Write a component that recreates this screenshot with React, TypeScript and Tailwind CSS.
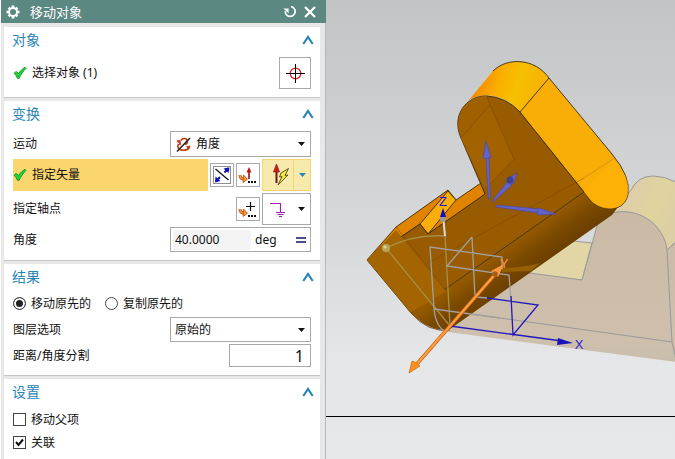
import type { ReactNode } from "react";

function Check() {
  return (
    <svg width="14" height="14" viewBox="0 0 14 14" className="shrink-0" aria-hidden="true">
      <path d="M1.2 7.2 L3.2 5.4 L5.5 7.6 C7.2 5 9.5 2.8 12 1.3 L13 2.3 C10.2 4.9 8 8.6 6 12.4 L4.6 12.4 C3.8 10.3 2.7 8.7 1.2 7.2Z" fill="#22d43c" stroke="#0e9a22" strokeWidth="1" />
    </svg>
  );
}

function Gear() {
  return (
    <svg width="16" height="16" viewBox="0 0 16 16" aria-hidden="true">
      <path d="M8 1.500v13M1.500 8h13M3.600 3.600l8.800 8.800M12.400 3.600l-8.800 8.800" stroke="#fff" strokeWidth="2.600" />
      <circle cx="8" cy="8" r="4" fill="#5c8882" stroke="#fff" strokeWidth="1.900" />
    </svg>
  );
}

function Section({ title, className, children }: { title: string; className?: string; children: ReactNode }) {
  return (
    <section className={"bg-white px-2 " + (className ?? "")}>
      <div className="flex h-[26px] items-center justify-between">
        <h2 className="text-sm leading-6 text-[#2b86b8]">{title}</h2>
        <button type="button" aria-label={title} className="-mr-1.5 flex h-5 w-5 items-center justify-center">
          <svg width="12" height="10" viewBox="0 0 12 10" aria-hidden="true">
            <path d="M1.300 9 6 2l4.700 7" fill="none" stroke="#2b86b8" strokeWidth="2.200" />
          </svg>
        </button>
      </div>
      {children}
    </section>
  );
}

function Caret({ color = "#111" }: { color?: string }) {
  return (
    <svg width="7" height="4" viewBox="0 0 7 4" className="shrink-0" aria-hidden="true">
      <path d="M0 0h7L3.500 4z" fill={color} />
    </svg>
  );
}

function Hook() {
  return (
    <>
      <path d="M3 11c0 3 1.500 4.200 4.500 4.200" fill="none" stroke="#b8481c" strokeWidth="3" />
      <path d="M3 11c0 3 1.500 4.200 4.500 4.200" fill="none" stroke="#f39a35" strokeWidth="1.600" />
      <path d="M6.500 11l4 4.200-4.500 3.300z" fill="#f39a35" stroke="#b8481c" strokeWidth=".8" />
      <path d="M11 17h2v2h-2zM14 17h2v2h-2zM17 17h2v2h-2z" fill="#111" />
    </>
  );
}

const box = "border border-[#a9a9a9] bg-white";

function Panel() {
  return (
    <form className="ml-px flex w-[325px] shrink-0 flex-col border-r border-[#b5b7ba] bg-[#e7e7e7]" onSubmit={(e) => e.preventDefault()}>
      <header className="-mr-px flex h-[23px] items-center bg-[#5c8882] pl-1 pr-2.5 text-white">
        <Gear />
        <h1 className="ml-2 flex-1 pl-px text-[13px] leading-5">移动对象</h1>
        <button type="button" aria-label="重置" className="mr-2">
          <svg width="13" height="13" viewBox="0 0 13 13" aria-hidden="true">
            <path d="M8 1.700a4.900 4.900 0 1 1-5.700 4.500" fill="none" stroke="#fff" strokeWidth="1.800" />
            <path d="M.3 3.500H5.600V8.200z" fill="#fff" />
          </svg>
        </button>
        <button type="button" aria-label="关闭">
          <svg width="12" height="12" viewBox="0 0 12 12" aria-hidden="true">
            <path d="M1 1l10 10M11 1L1 11" stroke="#fff" strokeWidth="2.200" />
          </svg>
        </button>
      </header>

      <div className="flex flex-1 flex-col gap-[3px] pl-[3px] pr-[5px] pt-1 text-xs text-[#111]">
        <Section title="对象" className="border-b border-[#c6c6c6] pb-1">
          <div className="flex h-10 items-center gap-[5px] px-px">
            <Check />
            <span className="flex-1">选择对象 (1)</span>
            <button type="button" aria-label="选择" className={"flex h-8 w-8 items-center justify-center " + box}>
              <svg width="20" height="20" viewBox="0 0 20 20" aria-hidden="true">
                <circle cx="10.500" cy="10.500" r="5.300" fill="none" stroke="#e02020" strokeWidth="1.300" />
                <path d="M10.500 1v19M1 10.500h19" stroke="#000" />
              </svg>
            </button>
          </div>
        </Section>

        <Section title="变换" className="border-b border-[#c6c6c6] pb-2">
          <div className="flex flex-col gap-0.5 px-px pt-1">
            <div className="flex h-[26px] items-center">
              <span className="flex-1">运动</span>
              <button type="button" aria-haspopup="listbox" className={"flex h-[26px] w-[141px] items-center pl-1 pr-[5px] " + box}>
                <svg width="17" height="17" viewBox="0 0 17 17" aria-hidden="true">
                  <path d="M2 5.500C4 4.500 5.500 6 5 9M3.500 8C2 11 3.500 14 7 14.200 11 14.400 13.500 13 13.800 11.500M6 4.500C7.500 1.500 12 2 12.300 5 12.500 7 11.500 8 10 8.500" fill="none" stroke="#c83618" strokeWidth="1.700" />
                  <path d="M1.500 5 5.500 4v4.500zM11 10.500l4.500-1-1.500 4.500z" fill="#c83618" />
                  <path d="M2 15.500 15 2" stroke="#222" strokeWidth="1.500" />
                </svg>
                <span className="ml-1 flex-1 text-left">角度</span>
                <Caret />
              </button>
            </div>
            <div className="flex h-8 items-center">
              <div className="mr-0.5 flex h-8 flex-1 items-center gap-[5px] bg-[#fbd66f]">
                <Check />
                <span>指定矢量</span>
              </div>
              <button type="button" aria-label="反向" className={"mr-0.5 h-6 w-6 " + box}>
                <svg width="22" height="22" viewBox="0 0 22 22" aria-hidden="true">
                  <rect x="2.500" y="2.500" width="17" height="17" fill="none" stroke="#222" strokeDasharray="1 1" />
                  <path d="M4.500 5l13 11" stroke="#111" strokeWidth="1.300" />
                  <path d="M5 17.500l4-4.500M13.500 8.500l4-4.500" stroke="#1010b8" strokeWidth="2" />
                  <path d="M4 18.500l.5-6 5 4.500zM18.500 3.500l-6 1 5 4.500z" fill="#1010b8" />
                </svg>
              </button>
              <button type="button" aria-label="矢量对话框" className={"mr-0.5 h-6 w-6 " + box}>
                <svg width="22" height="22" viewBox="0 0 22 22" aria-hidden="true">
                  <path d="M12 6v9" stroke="#8c1414" strokeWidth="1.600" />
                  <path d="M12 3l2.500 5.500h-5z" fill="#c01818" />
                  <Hook />
                </svg>
              </button>
              <div className="flex h-8 w-[49px] border border-[#f5d473] bg-[#f8eaad]">
                <button type="button" aria-label="自动判断的矢量" className="flex flex-1 items-center justify-center">
                  <svg width="24" height="24" viewBox="0 0 24 24" aria-hidden="true">
                    <path d="M10.500 8v12" stroke="#6d1717" strokeWidth="2" />
                    <path d="M10.500 1l3 8h-6z" fill="#d01c1c" stroke="#851414" strokeWidth=".7" />
                    <path d="M22.500 5.500 15 10l-1.500 4 2.500-.5-4 8.500L22 12l-3 .5z" fill="#f6e83c" stroke="#4f4a18" strokeWidth=".9" />
                  </svg>
                </button>
                <button type="button" aria-label="矢量类型" className="flex w-[17px] items-center justify-center border-l border-[#f5d473]">
                  <Caret color="#2b86b8" />
                </button>
              </div>
            </div>
            <div className="flex h-8 items-center">
              <span className="flex-1">指定轴点</span>
              <button type="button" aria-label="点对话框" className={"mr-0.5 h-6 w-6 " + box}>
                <svg width="22" height="22" viewBox="0 0 22 22" aria-hidden="true">
                  <path d="M13.500 4v9M9 8.500h9" stroke="#111" strokeWidth="1.200" />
                  <Hook />
                </svg>
              </button>
              <button type="button" aria-haspopup="listbox" aria-label="点类型" className={"flex h-8 w-[49px] items-center justify-between pl-1 pr-[5px] " + box}>
                <svg width="22" height="22" viewBox="0 0 22 22" aria-hidden="true">
                  <path d="M3 5.500h10.500V14M9 14.500h9M10.500 16.500h6M12 18.500h3" fill="none" stroke="#a020b0" strokeWidth="1.200" />
                </svg>
                <Caret />
              </button>
            </div>
            <div className="flex h-[25px] items-center">
              <label htmlFor="angle" className="flex-1">角度</label>
              <div className={"flex h-[25px] w-[141px] items-center pl-0.5 pr-1 " + box}>
                <input id="angle" defaultValue="40.0000" className="h-5 w-[78px] bg-[#f4f4f4] pl-0.5 outline-none" />
                <span className="ml-1 flex-1">deg</span>
                <svg width="10" height="6" viewBox="0 0 10 6" aria-hidden="true"><path d="M0 1h10M0 5h10" stroke="#10106c" strokeWidth="1.600" /></svg>
              </div>
            </div>
          </div>
        </Section>

        <Section title="结果" className="border-b border-[#c6c6c6] pb-2">
          <div className="px-px">
            <div className="flex h-[27px] items-center gap-3.5">
              {["移动原先的", "复制原先的"].map((name, i) => (
                <label key={name} className="flex items-center gap-[5px]">
                  <input type="radio" name="copy" defaultChecked={i === 0} className="h-[13px] w-[13px] appearance-none rounded-full border border-[#444] checked:bg-[#222] checked:shadow-[inset_0_0_0_2px_white]" />
                  {name}
                </label>
              ))}
            </div>
            <div className="flex h-[25px] items-center">
              <label htmlFor="layer" className="flex-1">图层选项</label>
              <div className="relative">
                <select id="layer" className={"h-[25px] w-[141px] appearance-none pl-1 " + box}><option>原始的</option></select>
                <span className="pointer-events-none absolute right-1.5 top-0 flex h-full items-center"><Caret /></span>
              </div>
            </div>
            <div className="mt-0.5 flex h-[23px] items-center">
              <label htmlFor="divide" className="flex-1">距离/角度分割</label>
              <input id="divide" defaultValue="1" className={"h-[23px] w-[82px] pr-1.5 text-right text-base outline-none " + box} />
            </div>
          </div>
        </Section>

        <Section title="设置" className="flex-1">
          <div className="flex flex-col pl-px pt-[3px]">
            {["移动父项", "关联"].map((name, i) => (
              <label key={name} className="flex h-[23px] items-center gap-[5px]">
                <span className="relative flex h-[13px] w-[13px]">
                  <input type="checkbox" defaultChecked={i === 1} className="peer h-[13px] w-[13px] appearance-none border border-[#444] bg-white" />
                  <svg viewBox="0 0 13 13" className="pointer-events-none absolute inset-0 hidden peer-checked:block" aria-hidden="true">
                    <path d="M3 6l2.500 3L10 3.500" fill="none" stroke="#111" strokeWidth="2" />
                  </svg>
                </span>
                {name}
              </label>
            ))}
          </div>
        </Section>
      </div>
    </form>
  );
}

/* Model drawing: the rotated solid over the translucent original body. */
function Viewport() {
  return (
    <svg className="absolute inset-0 h-full w-full" viewBox="326 0 349 459" preserveAspectRatio="xMinYMin slice" role="img" aria-label="模型">
      <defs>
        <linearGradient id="sky" x1="0" y1="0" x2="0" y2="1">
          <stop offset="0" stopColor="#c3c4c6" />
          <stop offset=".5" stopColor="#d7d8da" />
          <stop offset=".8" stopColor="#e5e7e9" />
          <stop offset="1" stopColor="#e6e8ea" />
        </linearGradient>
        <linearGradient id="cap" gradientUnits="userSpaceOnUse" x1="476" y1="82" x2="535" y2="100">
          <stop offset="0" stopColor="#f28a00" />
          <stop offset=".35" stopColor="#fbae00" />
          <stop offset=".65" stopColor="#f5c000" />
          <stop offset="1" stopColor="#f8b404" />
        </linearGradient>
        <linearGradient id="under" gradientUnits="userSpaceOnUse" x1="498" y1="252" x2="519" y2="281">
          <stop offset="0" stopColor="#965b00" />
          <stop offset=".5" stopColor="#7c4a00" />
          <stop offset="1" stopColor="#6b3f00" />
        </linearGradient>
        <linearGradient id="cream" gradientUnits="userSpaceOnUse" x1="630" y1="190" x2="674" y2="215">
          <stop offset="0" stopColor="#dfcdaa" />
          <stop offset=".6" stopColor="#e0d49e" />
          <stop offset="1" stopColor="#dccfa4" />
        </linearGradient>
        <linearGradient id="ghost" x1="0" y1="0" x2="0" y2="1">
          <stop offset="0" stopColor="#cabaa5" />
          <stop offset=".85" stopColor="#cec0ad" />
          <stop offset="1" stopColor="#c8bdad" />
        </linearGradient>
      </defs>
      <rect x="326" width="349" height="459" fill="url(#sky)" />

      <g stroke="#999" strokeWidth="1">
        <path d="M607 218 631 190Q638 176 653 176Q664 176 676 182V242L667 250L625 214Z" fill="url(#cream)" />
        <path d="M530 238 573 241 592 243 582 280 520 273Z" fill="#e3d6a6" />
        <path d="M440 331 500 269 582 280 597 226C604 207 638 207 655 225Q666 237 667 250L676 242V362Z" fill="url(#ghost)" stroke="none" />
        <path d="M500 269 582 280 597 226C604 207 638 207 655 225Q666 237 667 250L676 242M667 250 672 342 676 360M434 309 500 318 672 342" fill="none" />
      </g>

      <path d="M411 313 584 192 594 203Q605 209 618 207L612 215 450 329Q430 333 411 313Z" fill="url(#under)" />
      <path d="M502 268Q522 268 540 263L531 271 502 272Z" fill="#966000" />

      <g stroke="#3a2a10" strokeWidth=".9" strokeLinejoin="round">
        <path d="M367 260 396 227 448 190 456 200 481 183 486 194 428 234 420 224Z" fill="#e08400" />
        <path d="M420 224 448 191 456 200 428 234Z" fill="#fbae0a" />
        <path d="M469 100 493 71C507 57 535 58 549 78L520 112C505 94 482 92 469 100Z" fill="url(#cap)" stroke="none" />
        <path d="M367 260 420 224 428 234 485 194 461 138C451 116 466 95 487 96Q506 97 520 112L584 192 411 313Z" fill="#985b00" />
        <path d="M493 71C507 57 535 58 549 78" fill="none" />
        <path d="M520 112 549 78 612 154Q631 177 628 194C625 212 604 212 592 202L584 192Z" fill="#f9ae07" />
      </g>
      <path d="M584 192 613 159Q631 178 628 194C624 212 604 212 592 202Z" fill="#ffb005" opacity=".7" />
      <path d="M461 137C452 116 466 95 487 96L490 105Z" fill="#a06000" />
      <path d="M490 105 514 159 485 189 461 138Z" fill="#a36200" />
      <path d="M367 260 396 230 446 291 411 313Z" fill="#a46400" />
      <g fill="none" stroke="#754800" strokeWidth=".7" opacity=".7">
        <path d="M461 138 490 105 514 159 485 189M487 96 490 105M396 227 446 291M428 263 584 178" />
      </g>
      <path d="M584 178 613 159" stroke="#c98500" strokeWidth=".7" />
      <path d="M411 313Q428 333 450 330" fill="none" stroke="#5b3a10" strokeWidth=".8" />

      <g fill="none" strokeWidth="1.300">
        <path d="M386 248Q414 234 445 236L450 326 386 248" stroke="#a3904b" />
        <path d="M502 269V257L430 247 434 309Q436 327 445 331M434 309 500 318M472 237 447 266 509 275 511 300M472 237 475 297 487 298" stroke="#a2a0a0" />
        <path d="M443 215 445 236" stroke="#ddd" strokeWidth="2" />
        <path d="M487 298 538 305 513 335 511 296M450 326 562 341" stroke="#2219bd" />
      </g>
      <circle cx="386" cy="248" r="4" fill="#b6a55b" />
      <circle cx="385" cy="247" r="1.500" fill="#ddd29a" />
      <circle cx="443" cy="219" r="3" fill="#999" />
      <path d="M443 208 446 217H440Z" fill="#120bc0" />
      <path d="M573 343 558 338 557 345Z" fill="#1a12b8" />

      <path d="M416 365 498 271" stroke="#b95f10" strokeWidth="3.500" />
      <path d="M416 365 498 271" stroke="#ff9b38" strokeWidth="2.500" />
      <path d="M409 373 412 361Q417 362 420 366Z" fill="#ff9020" stroke="#c96808" strokeWidth=".7" />
      <path d="M504 264 491 271 498 277Z" fill="#ff9840" />
      <circle cx="495" cy="274" r="2.800" fill="#a75c1c" />

      <g fill="#6262c8" stroke="#4a48a5" strokeWidth=".6">
        <path d="M486 158 489 158 490.500 198 488.500 199Z" />
        <path d="M486 141 491 157Q487 160 483 158Z" />
        <path d="M508 181 512 185 493 202 492 201Z" />
        <path d="M517 173 514 183Q509 186 506 180Z" />
        <path d="M496 205 540 209 539 213 496 207Z" />
        <path d="M556 214 539 208Q536 211 538 215Z" />
      </g>
      <circle cx="510" cy="180" r="3.500" fill="#40408b" />

      <g fontFamily="Liberation Sans, Arial, sans-serif" fontSize="13" textAnchor="middle">
        <text x="443" y="206" fill="#1714e0">Z</text>
        <text x="504" y="268" fill="#ff954c">Y</text>
        <text x="579" y="349" fill="#2822c8">X</text>
      </g>
      <path d="M326 416.500H675" stroke="#000" />
    </svg>
  );
}

export default function App() {
  return (
    <div className="flex min-h-screen bg-white font-['Noto_Sans','Noto_Sans_CJK_SC',sans-serif]">
      <Panel />
      <main className="relative min-w-0 flex-1 overflow-hidden bg-[#d7d8da]">
        <Viewport />
      </main>
    </div>
  );
}
